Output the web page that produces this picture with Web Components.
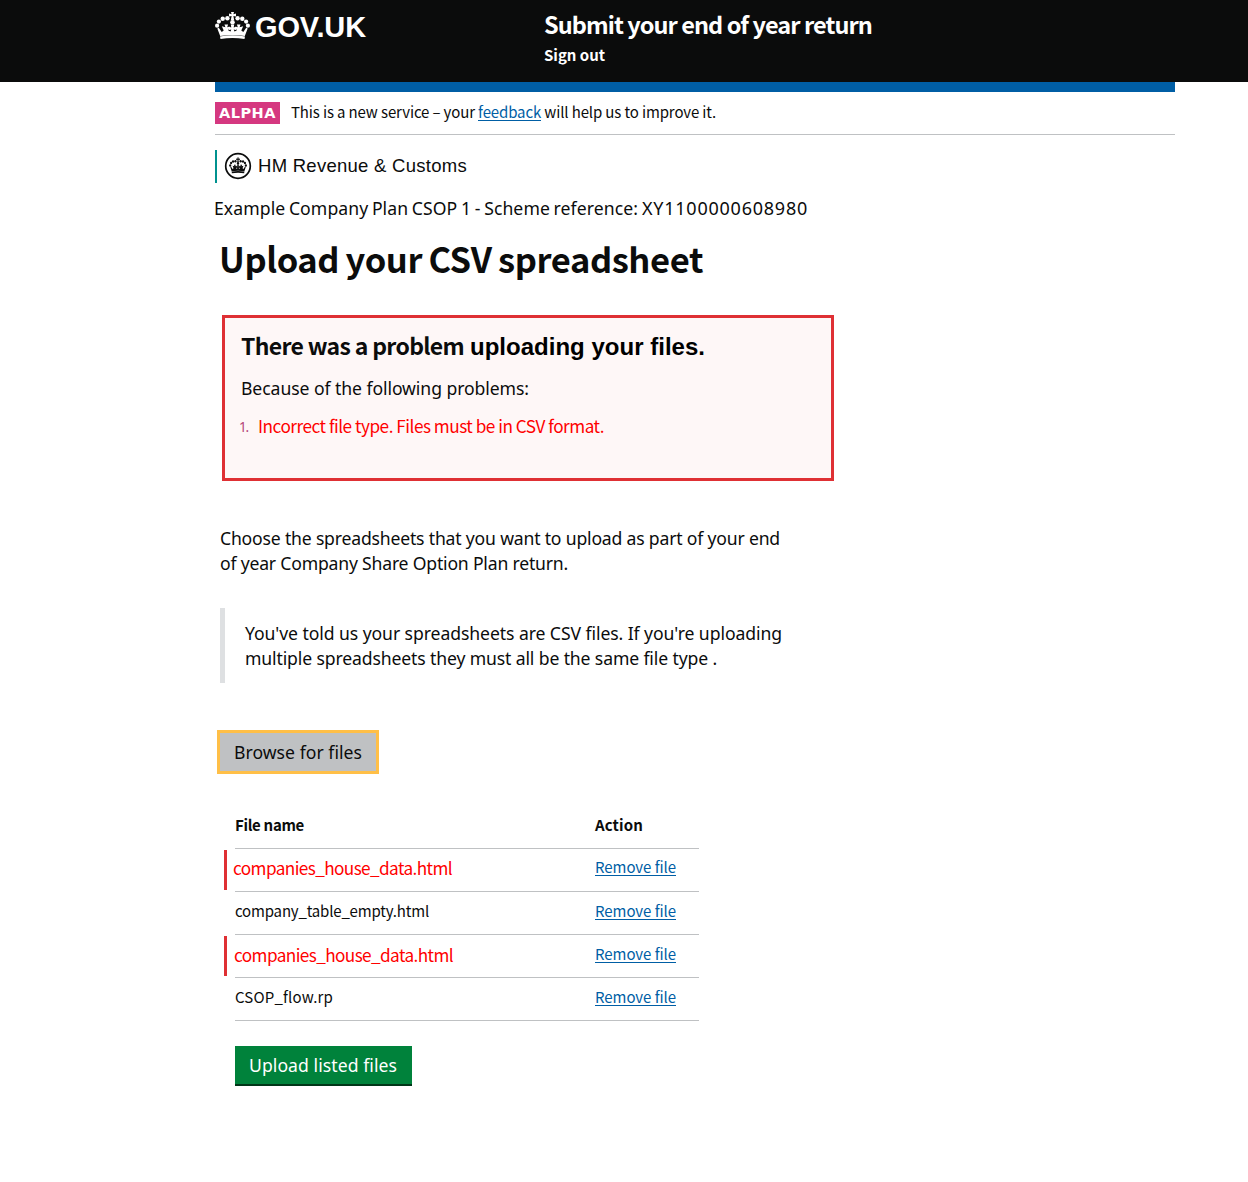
<!DOCTYPE html>
<html lang="en">
<head>
<meta charset="utf-8">
<title>Upload your CSV spreadsheet</title>
<style>
body{margin:0;background:#fff;color:#0b0c0c;font-family:"Noto Sans","Liberation Sans",sans-serif}
</style>
</head>
<body>
<upload-page></upload-page>
<script>
// One line of text: b = baseline from the top, h = line height, w = measure the tracking is set to
class TextLine extends HTMLElement {
  connectedCallback() {
    const a = (n, d) => this.getAttribute(n) || d;
    const fam = {noto:'"Noto Sans"', cjk:'"Noto Sans CJK SC"', arial:'"Liberation Sans"', dejavu:'"DejaVu Sans"'}[a('face','noto')];
    const root = this.attachShadow({mode:'open'});
    root.innerHTML = `<style>
      :host{display:block;line-height:0;white-space:nowrap;height:${a('h',25)}px;flex:none}
      :host::before{content:"";display:inline-block;height:${a('b',18)}px}
      span{font:${a('weight',400)} ${a('size',17.6)}px/0 ${fam},sans-serif;color:${a('color','inherit')};word-spacing:${a('ws',0)}px}
      ::slotted(a){color:#005ea5;text-decoration:none;border-bottom:1px solid #005ea5;display:inline-block;line-height:16px}
    </style><span><slot></slot></span>`;
    const w = +a('w', 0);
    if (w) {
      const s = root.querySelector('span');
      const nat = s.getBoundingClientRect().width;
      s.style.letterSpacing = ((w - nat) / this.textContent.length) + 'px';
    }
  }
}

const crown = `
  <g fill="currentColor">
    <path d="M16 0h3l-.6 2.200 2.600-.6v3l-2.600-.6.8 4.200h-3.400l.8-4.200-2.600.6v-3l2.600.6z"/>
    <circle cx="17.500" cy="10.200" r="2.300"/>
    <circle cx="12.400" cy="6.300" r="2.200"/><circle cx="22.600" cy="6.300" r="2.200"/>
    <circle cx="7.700" cy="6.800" r="2.200"/><circle cx="27.300" cy="6.800" r="2.200"/>
    <circle cx="3.900" cy="9.600" r="2.100"/><circle cx="31.100" cy="9.600" r="2.100"/>
    <circle cx="2.100" cy="13.700" r="2.100"/><circle cx="32.900" cy="13.700" r="2.100"/>
    <path d="M2.300 16.500 5.200 24Q17.500 21.800 29.800 24L32.700 16.500 31.200 15.700 28.300 20 26.300 18.600 28.200 14.300 24.600 15.200 25.500 12.600H21.900L22.800 15.200 20.300 14.400 21.700 18.600 19.500 19.600 18.700 17.500 21 18V14.800L18.700 15.400 19.200 12.600H15.800L16.300 15.400 14 14.800V18L16.300 17.500 15.500 19.600 13.300 18.600 14.700 14.400 12.200 15.200 13.100 12.600H9.500L10.400 15.200 6.800 14.300 8.700 18.600 6.700 20 3.800 15.700z"/>
    <path d="M5 24.500Q17.500 22.200 30 24.500L29.500 27Q17.500 25.200 5.500 27z"/>
  </g>`;

class CrownMark extends HTMLElement {
  connectedCallback() {
    this.attachShadow({mode:'open'}).innerHTML = `<style>:host{display:block;flex:none}svg{display:block;width:100%;height:100%}</style><svg viewBox="0 0 35 27">${crown}</svg>`;
  }
}

class SiteHeader extends HTMLElement {
  connectedCallback() {
    this.attachShadow({mode:'open'}).innerHTML = `<style>
      :host{display:flex;height:82px;background:#0b0c0c;color:#fff;padding-left:215px;box-sizing:border-box}
      .logo{display:flex;width:329px}
      crown-mark{width:35px;height:27px;margin:12px 5px 0 0}
    </style>
    <div class="logo"><crown-mark></crown-mark><text-line face="arial" weight="700" size="29" b="37" h="50" w="111">GOV.UK</text-line></div>
    <div><text-line face="cjk" weight="700" size="23.500" b="34" h="44" w="328">Submit your end of year return</text-line>
    <text-line face="cjk" weight="700" size="15" b="17" h="24" w="61">Sign out</text-line></div>`;
  }
}

class PhaseBanner extends HTMLElement {
  connectedCallback() {
    this.attachShadow({mode:'open'}).innerHTML = `<style>
      :host{display:flex;box-sizing:border-box;width:960px;height:53px;margin-left:215px;border-top:10px solid #005ea5;border-bottom:1px solid #bfc1c3;padding-top:10px}
      .tag{background:#d53880;color:#fff;width:61px;height:22px;padding-left:4px;margin-right:11px}
    </style>
    <div class="tag"><text-line face="dejavu" weight="700" size="14.500" b="16" h="22" w="57">ALPHA</text-line></div>
    <text-line face="cjk" size="15" b="16" h="22" w="425">This is a new service – your <a>feedback</a> will help us to improve it.</text-line>`;
  }
}

class OrgLogo extends HTMLElement {
  connectedCallback() {
    this.attachShadow({mode:'open'}).innerHTML = `<style>
      :host{display:flex;height:33px;margin:15px 0 0 215px;border-left:2px solid #00928f}
      svg{width:28px;height:28px;margin:2px 6px 0 7px;flex:none;color:#0b0c0c}
    </style>
    <svg viewBox="0 0 28 28"><circle cx="14" cy="14" r="12.300" fill="none" stroke="currentColor" stroke-width="1.700"/><g transform="translate(5.100 5.500) scale(.51 .58)">${crown}</g></svg>
    <text-line face="arial" size="18.500" b="22" h="33" w="209" color="#0b0c0c">HM Revenue &amp; Customs</text-line>`;
  }
}

class ErrorSummary extends HTMLElement {
  connectedCallback() {
    this.attachShadow({mode:'open'}).innerHTML = `<style>
      :host{display:block;box-sizing:border-box;width:612px;height:166px;margin:29px 0 0 222px;border:3px solid #df3034;background:#fef7f7;padding:12px 0 0 16px}
      .row{display:flex}.a{width:229px}.n{width:19px;margin-left:-2px}
    </style>
    <div class="row"><div class="a"><text-line face="cjk" weight="700" size="23" b="25" h="44" w="223">There was a problem</text-line></div>
    <text-line face="arial" weight="700" size="24" b="25" h="44" w="235" color="#000">uploading your files.</text-line></div>
    <text-line b="21" h="38" w="288">Because of the following problems:</text-line>
    <div class="row"><div class="n"><text-line size="13.500" b="20" h="30" w="9" color="#b5457a">1.</text-line></div>
    <text-line face="cjk" size="17.200" b="21" h="30" w="346" color="#f00">Incorrect file type. Files must be in CSV format.</text-line></div>`;
  }
}

class InsetText extends HTMLElement {
  connectedCallback() {
    this.attachShadow({mode:'open'}).innerHTML = `<style>
      :host{display:block;box-sizing:border-box;height:75px;margin:30px 0 0 220px;border-left:5px solid #dee0e2;padding:13px 0 0 20px}
    </style><slot></slot>`;
  }
}

class UiButton extends HTMLElement {
  connectedCallback() {
    this.attachShadow({mode:'open'}).innerHTML = `<style>
      :host{display:block;box-sizing:border-box}
      :host([kind=browse]){width:162px;height:44px;margin:47px 0 0 217px;border:3px solid #ffbf47;background:#bfc1c3;padding-left:14px}
      :host([kind=submit]){width:177px;height:40px;margin:25px 0 0 235px;border-bottom:2px solid #003618;background:#00823b;color:#fff;padding-left:14px}
    </style><slot></slot>`;
  }
}

class FileRow extends HTMLElement {
  connectedCallback() {
    const bad = this.hasAttribute('invalid');
    const g = (n) => this.getAttribute(n);
    this.attachShadow({mode:'open'}).innerHTML = `<style>
      :host{display:flex;height:43px}
      .bar{width:3px;height:40px;margin:1px 0 0;background:${bad ? '#df3034' : 'transparent'}}
      .cells{display:flex;box-sizing:border-box;width:464px;height:43px;margin-left:8px;border-bottom:1px solid #bfc1c3}
      .name{width:360px;margin-left:${g('dx') || 0}px}
    </style><div class="bar"></div><div class="cells"><div class="name">
      <text-line face="cjk" size="${bad ? 17.2 : 15}" b="${g('nb')}" h="42" w="${g('w')}" color="${bad ? '#f00' : '#0b0c0c'}">${g('name')}</text-line></div>
      <text-line face="cjk" size="15" b="${g('ab')}" h="42" w="81" style="margin-left:${-(g('dx') || 0)}px"><a>Remove file</a></text-line></div>`;
  }
}

class FileTable extends HTMLElement {
  connectedCallback() {
    this.attachShadow({mode:'open'}).innerHTML = `<style>
      :host{display:block;margin:32px 0 0 224px}
      .head{display:flex;box-sizing:border-box;width:464px;height:43px;margin-left:11px;border-bottom:1px solid #bfc1c3}
      .c{width:360px}
    </style>
    <div class="head"><div class="c"><text-line face="cjk" weight="700" size="15" b="25" h="42" w="69">File name</text-line></div><text-line face="cjk" weight="700" size="15" b="25" h="42" w="48">Action</text-line></div>
    <file-row invalid name="companies_house_data.html" w="219" nb="26" ab="24" dx="-2"></file-row>
    <file-row name="company_table_empty.html" w="194" nb="25" ab="25"></file-row>
    <file-row invalid name="companies_house_data.html" w="219" nb="27" ab="25" dx="-1"></file-row>
    <file-row name="CSOP_flow.rp" w="98" nb="25" ab="25"></file-row>`;
  }
}

class UploadPage extends HTMLElement {
  connectedCallback() {
    this.attachShadow({mode:'open'}).innerHTML = `<style>
      :host{display:block;min-height:1182px}
      .ref{display:flex;gap:4px;padding:15px 0 0 214px}.h1{padding:15px 0 0 219px}.intro{padding:46px 0 0 220px}
    </style>
    <site-header></site-header>
    <phase-banner></phase-banner>
    <org-logo></org-logo>
    <div class="ref"><text-line b="17" h="28" w="424" ws="-1">Example Company Plan CSOP 1 - Scheme reference:</text-line><text-line size="18" b="17" h="28" w="166">XY1100000608980</text-line></div>
    <div class="h1"><text-line face="cjk" weight="700" size="34.500" b="32" h="45" w="484" ws="-1">Upload your CSV spreadsheet</text-line></div>
    <error-summary></error-summary>
    <div class="intro"><text-line b="18" h="25" w="560">Choose the spreadsheets that you want to upload as part of your end</text-line>
    <text-line b="18" h="26" w="348">of year Company Share Option Plan return.</text-line></div>
    <inset-text><text-line b="19" h="25" w="537">You've told us your spreadsheets are CSV files. If you're uploading</text-line>
    <text-line b="19" h="25" w="472">multiple spreadsheets they must all be the same file type .</text-line></inset-text>
    <ui-button kind="browse"><text-line b="26" h="38" w="128">Browse for files</text-line></ui-button>
    <file-table></file-table>
    <ui-button kind="submit"><text-line b="26" h="38" w="148">Upload listed files</text-line></ui-button>`;
  }
}

customElements.define('text-line', TextLine);
customElements.define('crown-mark', CrownMark);
customElements.define('site-header', SiteHeader);
customElements.define('phase-banner', PhaseBanner);
customElements.define('org-logo', OrgLogo);
customElements.define('error-summary', ErrorSummary);
customElements.define('inset-text', InsetText);
customElements.define('ui-button', UiButton);
customElements.define('file-row', FileRow);
customElements.define('file-table', FileTable);
customElements.define('upload-page', UploadPage);
</script>
</body>
</html>
